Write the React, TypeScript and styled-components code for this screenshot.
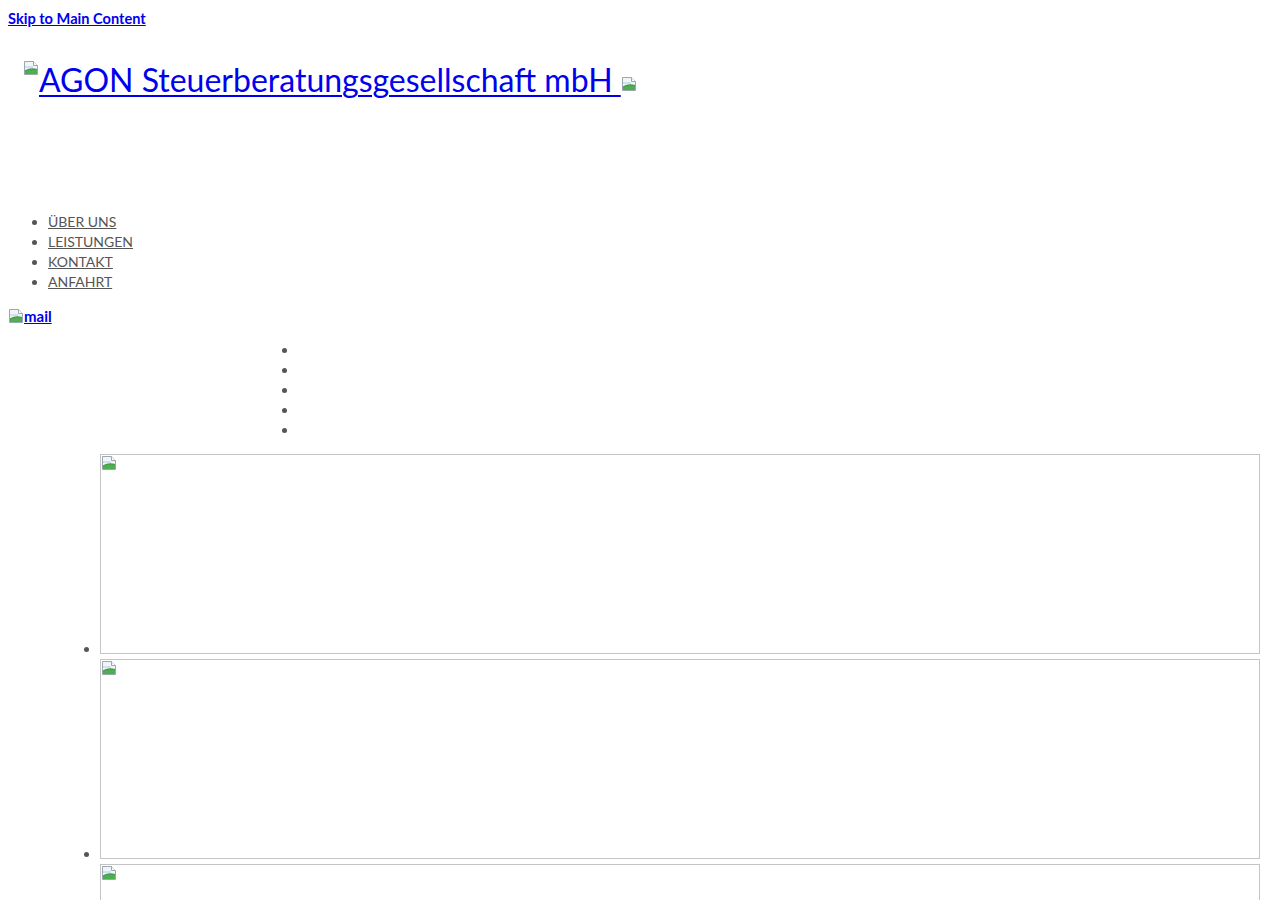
import React from 'react'
import styled, { createGlobalStyle } from 'styled-components'

const GlobalStyle = createGlobalStyle`
  html, body {
    margin: 0;
    padding: 0;
    background: #ffffff;
  }
  body {
    margin: 8px;
    font-family: Lato, "Noto Sans", sans-serif;
    color: #555555;
  }
`

const SkipLink = styled.a`
  display: inline-block;
  font-size: 14.6px;
  font-weight: 700;
  line-height: 20px;
  color: #0000ee;
  text-decoration: underline;
`

const Header = styled.header`
  padding: 31px 15px 0;
  height: 152px;
`

const LogoLine = styled.div`
  line-height: 40px;
  white-space: nowrap;
`

const LogoLink = styled.a`
  font-size: 32px;
  line-height: 40px;
  color: #0000ee;
  text-decoration: underline;
  text-underline-offset: 3px;
  text-decoration-thickness: 2px;
`

const IconSlot = styled.span<{ $align?: string }>`
  display: inline-block;
  width: 16px;
  height: 16px;
  vertical-align: ${({ $align }) => $align ?? 'baseline'};
  line-height: 0;
`

const NavList = styled.ul`
  margin: 0;
  padding-left: 40px;
  list-style: disc;
  color: #555555;
`

const NavItem = styled.li`
  font-size: 14px;
  line-height: 20px;
`

const NavLink = styled.a`
  color: #555555;
  text-decoration: underline;
`

const MailRow = styled.p`
  margin: 14px 0 0;
  line-height: 20px;
  height: 20px;
`

const MailLink = styled.a`
  color: #0000ee;
  font-size: 15px;
  font-weight: 700;
  text-decoration: underline;
`

const DotList = styled.ul`
  margin: 14px 0 0;
  padding-left: 290px;
  list-style: disc;
`

const DotItem = styled.li`
  height: 20px;
  line-height: 20px;
  font-size: 14px;
`

const SlideList = styled.ul`
  margin: 14px 0 0;
  padding-left: 92px;
  list-style: disc;
`

const SlideItem = styled.li`
  font-size: 14px;
  line-height: 20px;
  height: 205px;
`

const SlideFrame = styled.span`
  display: inline-block;
  box-sizing: border-box;
  width: 1160px;
  height: 200px;
  border: 1px solid #c4c4c4;
  overflow: hidden;
  vertical-align: baseline;
  line-height: 0;
`

function BrokenImage() {
  return (
    <svg width="16" height="16" viewBox="0 0 16 16">
      <path d="M1.5 1.5h9l4 4v9h-13z" fill="#f2f5f8" stroke="#9aa6b2" />
      <path d="M10.5 1.5v4h4" fill="#ffffff" stroke="#9aa6b2" />
      <path d="M2 6h8v2H2z" fill="#cfe0f0" />
      <path d="M2 14V11c3-2 7-3 12-1.5V14z" fill="#4caf50" />
      <path d="M2 11c3-2 7-3 12-1.5" fill="none" stroke="#2e7d32" strokeWidth="0.8" />
    </svg>
  )
}

const navItems = ['ÜBER UNS', 'LEISTUNGEN', 'KONTAKT', 'ANFAHRT']

export default function App() {
  return (
    <>
      <GlobalStyle />
      <SkipLink href="#main">Skip to Main Content</SkipLink>
      <Header>
        <LogoLine>
          <IconSlot $align="top">
            <BrokenImage />
          </IconSlot>
          <LogoLink href="#">AGON Steuerberatungsgesellschaft mbH </LogoLink>
          <IconSlot>
            <BrokenImage />
          </IconSlot>
        </LogoLine>
      </Header>
      <NavList>
        {navItems.map(item => (
          <NavItem key={item}>
            <NavLink href="#">{item}</NavLink>
          </NavItem>
        ))}
      </NavList>
      <MailRow>
        <MailLink href="#">
          <IconSlot $align="-2px">
            <BrokenImage />
          </IconSlot>
          mail
        </MailLink>
      </MailRow>
      <DotList>
        {[0, 1, 2, 3, 4].map(i => (
          <DotItem key={i} />
        ))}
      </DotList>
      <SlideList id="main">
        {[0, 1, 2].map(i => (
          <SlideItem key={i}>
            <SlideFrame>
              <BrokenImage />
            </SlideFrame>
          </SlideItem>
        ))}
      </SlideList>
    </>
  )
}
